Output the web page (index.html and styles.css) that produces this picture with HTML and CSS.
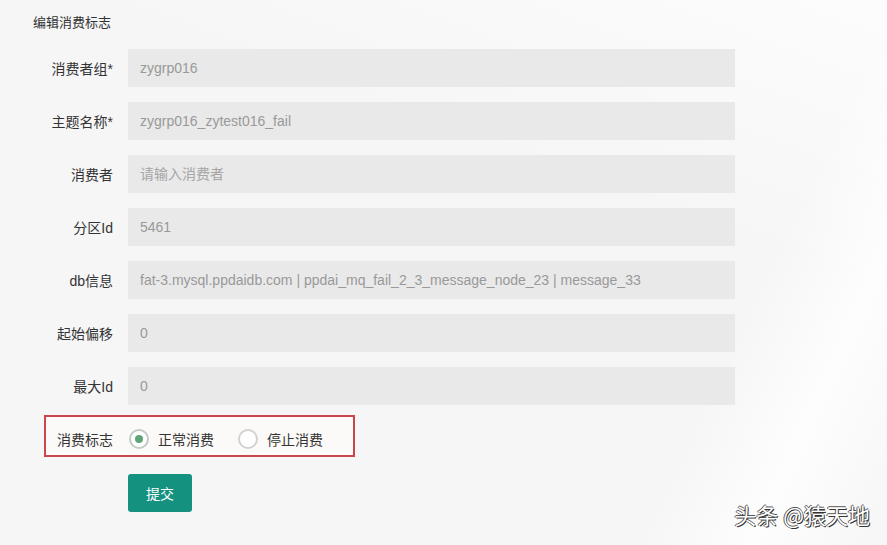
FILE: index.html
```html
<!DOCTYPE html>
<html>
<head>
  <meta charset="utf-8">
  <title>编辑消费标志</title>
  <link rel="stylesheet" href="styles.css">
</head>
<body>
  <div class="page">
    <div class="title">编辑消费标志</div>

    <form class="form" onsubmit="return false">
      <div class="row">
        <label class="label">消费者组*</label>
        <input class="input" type="text" value="zygrp016" readonly>
      </div>
      <div class="row">
        <label class="label">主题名称*</label>
        <input class="input" type="text" value="zygrp016_zytest016_fail" readonly>
      </div>
      <div class="row">
        <label class="label">消费者</label>
        <input class="input" type="text" placeholder="请输入消费者">
      </div>
      <div class="row">
        <label class="label">分区Id</label>
        <input class="input" type="text" value="5461" readonly>
      </div>
      <div class="row">
        <label class="label">db信息</label>
        <input class="input" type="text" value="fat-3.mysql.ppdaidb.com | ppdai_mq_fail_2_3_message_node_23 | message_33" readonly>
      </div>
      <div class="row">
        <label class="label">起始偏移</label>
        <input class="input" type="text" value="0" readonly>
      </div>
      <div class="row">
        <label class="label">最大Id</label>
        <input class="input" type="text" value="0" readonly>
      </div>

      <div class="flag-row">
        <span class="flag-label">消费标志</span>
        <label class="radio">
          <input type="radio" name="flag" checked>
          <span class="dot"></span>
          正常消费
        </label>
        <label class="radio">
          <input type="radio" name="flag">
          <span class="dot"></span>
          停止消费
        </label>
      </div>

      <button class="submit" type="submit">提交</button>
    </form>

    <div class="watermark">头条 @猿天地</div>
  </div>
</body>
</html>
```

FILE: styles.css
```css
html, body {
  margin: 0;
  padding: 0;
  height: 100%;
}

body {
  font-family: 'Liberation Sans', 'Noto Sans CJK SC', sans-serif;
  font-size: 14px;
  color: #333;
  background-color: #f6f6f7;
  background-image:
    linear-gradient(115deg, rgba(255,255,255,0) 0%, rgba(255,255,255,0) 78%, rgba(255,255,255,0.8) 88%, rgba(255,255,255,0) 100%),
    linear-gradient(200deg, rgba(255,255,255,0.7) 0%, rgba(255,255,255,0) 35%);
  overflow: hidden;
}

.page {
  position: relative;
  height: 545px;
}

.title {
  padding: 13px 0 0 33px;
  height: 20px;
  line-height: 20px;
  font-size: 13px;
}

.form {
  display: flex;
  flex-direction: column;
  gap: 15px;
  margin-top: 16px;
}

.row {
  display: flex;
  align-items: center;
  height: 38px;
}

.label {
  width: 113px;
  margin-right: 15px;
  text-align: right;
  color: #333;
}

.input {
  width: 607px;
  height: 38px;
  box-sizing: border-box;
  border: none;
  outline: none;
  padding: 0 12px;
  background: #e9e9e9;
  color: #999;
  font-family: inherit;
  font-size: 14px;
}

.input::placeholder {
  color: #a5a5a5;
}

.flag-row {
  display: flex;
  align-items: center;
  box-sizing: border-box;
  width: 311px;
  height: 42px;
  margin-left: 44px;
  margin-top: -5px;
  padding-top: 6px;
  border: 2px solid #c9474a;
  background: #fbfaf8;
}

.flag-label {
  width: 67px;
  text-align: right;
}

.radio {
  display: flex;
  align-items: center;
  margin-left: 16px;
  cursor: pointer;
}

.radio + .radio {
  margin-left: 24px;
}

.radio input {
  display: none;
}

.dot {
  width: 20px;
  height: 20px;
  box-sizing: border-box;
  border: 2px solid #d2d2d2;
  border-radius: 50%;
  background: #fff;
  margin-right: 9px;
  position: relative;
}

.radio input:checked + .dot {
  border-color: #c3cbc4;
}

.radio input:checked + .dot::after {
  content: '';
  position: absolute;
  left: 4px;
  top: 4px;
  width: 8px;
  height: 8px;
  border-radius: 50%;
  background: #5fa578;
}

.submit {
  width: 64px;
  height: 38px;
  margin: 2px 0 0 128px;
  border: none;
  border-radius: 3px;
  background-color: #15917f;
  color: #fff;
  font-family: inherit;
  font-size: 14px;
  cursor: pointer;
}

.watermark {
  position: absolute;
  right: 17px;
  bottom: 15px;
  font-family: 'Noto Sans CJK SC', sans-serif;
  font-size: 22px;
  color: #fff;
  text-shadow: 1px 1px 0 #333, -1px 0 0 #555, 0 -1px 0 #555;
}
```
